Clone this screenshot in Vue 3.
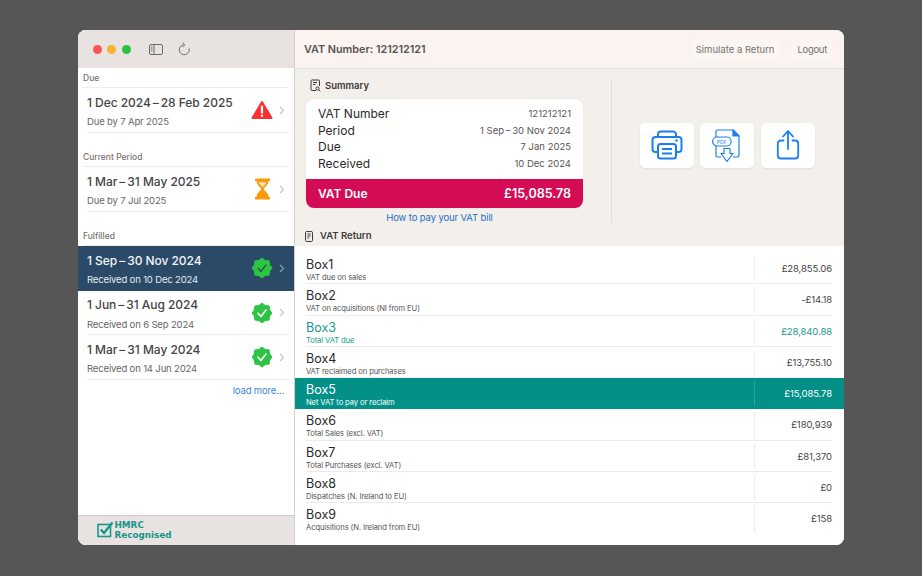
<script setup>
const sections = [
  {
    title: 'Due',
    items: [{ period: '1 Dec 2024\u2009–\u200928 Feb 2025', note: 'Due by 7 Apr 2025', status: 'alert' }],
  },
  {
    title: 'Current Period',
    items: [{ period: '1 Mar\u2009–\u200931 May 2025', note: 'Due by 7 Jul 2025', status: 'wait' }],
  },
  {
    title: 'Fulfilled',
    items: [
      { period: '1 Sep\u2009–\u200930 Nov 2024', note: 'Received on 10 Dec 2024', status: 'done', selected: true },
      { period: '1 Jun\u2009–\u200931 Aug 2024', note: 'Received on 6 Sep 2024', status: 'done' },
      { period: '1 Mar\u2009–\u200931 May 2024', note: 'Received on 14 Jun 2024', status: 'done' },
    ],
  },
];

const summary = [
  ['VAT Number', '121212121'],
  ['Period', '1 Sep\u2009–\u200930 Nov 2024'],
  ['Due', '7 Jan 2025'],
  ['Received', '10 Dec 2024'],
];

const boxes = [
  { name: 'Box1', desc: 'VAT due on sales', value: '£28,855.06' },
  { name: 'Box2', desc: 'VAT on acquisitions (NI from EU)', value: '-£14.18' },
  { name: 'Box3', desc: 'Total VAT due', value: '£28,840.88', kind: 'teal' },
  { name: 'Box4', desc: 'VAT reclaimed on purchases', value: '£13,755.10' },
  { name: 'Box5', desc: 'Net VAT to pay or reclaim', value: '£15,085.78', kind: 'net' },
  { name: 'Box6', desc: 'Total Sales (excl. VAT)', value: '£180,939' },
  { name: 'Box7', desc: 'Total Purchases (excl. VAT)', value: '£81,370' },
  { name: 'Box8', desc: 'Dispatches (N. Ireland to EU)', value: '£0' },
  { name: 'Box9', desc: 'Acquisitions (N. Ireland from EU)', value: '£158' },
];

// scalloped verified badge
const badge = (() => {
  const pts = [];
  for (let i = 0; i < 16; i++) {
    const r = i % 2 ? 8.2 : 10;
    const a = (Math.PI * 2 * i) / 16;
    pts.push(`${(11 + r * Math.sin(a)).toFixed(2)},${(11 - r * Math.cos(a)).toFixed(2)}`);
  }
  return pts.join(' ');
})();
</script>

<template>
  <div class="desktop">
    <div class="window">
      <aside class="sidebar">
        <div class="toolbar">
          <span class="light red"></span>
          <span class="light yellow"></span>
          <span class="light green"></span>
          <svg class="tool-icon panel" width="14" height="11" viewBox="0 0 14 11" fill="none" stroke="#6f6b68" stroke-width="1">
            <rect x="0.5" y="0.5" width="13" height="10" rx="1.5" />
            <path d="M5 0.5v10" />
            <path d="M1.800 3h1.700M1.800 5h1.700M1.800 7h1.700" />
          </svg>
          <svg class="tool-icon reload" width="12" height="14" viewBox="0 0 12 14" fill="none" stroke="#6f6b68" stroke-width="1">
            <path d="M5.500 2.800a5 5 0 1 0 5.600 3.600" />
            <path d="M4.500 0.600 6.800 2.800 4.500 5" />
          </svg>
        </div>

        <div class="periods">
          <section v-for="section in sections" :key="section.title" class="period-group">
            <h3>{{ section.title }}</h3>
            <div
              v-for="item in section.items"
              :key="item.period"
              class="period"
              :class="{ selected: item.selected }"
            >
              <div class="period-text">
                <div class="period-title">{{ item.period }}</div>
                <div class="period-note">{{ item.note }}</div>
              </div>
              <svg v-if="item.status === 'alert'" class="status" width="22" height="20" viewBox="0 0 22 20">
                <path d="M11 2 20.500 18H1.500Z" fill="#fb3131" stroke="#fb3131" stroke-width="2" stroke-linejoin="round" />
                <path d="M11 6.500v6" stroke="#fff" stroke-width="2.200" stroke-linecap="round" />
                <circle cx="11" cy="15.800" r="1.200" fill="#fff" />
              </svg>
              <svg v-else-if="item.status === 'wait'" class="status" width="22" height="22" viewBox="0 0 22 22">
                <path d="M4 0.500h15v2.500H4zM4 19h15v2.500H4z" fill="#fa9a0a" />
                <path d="M5.500 3h12c0 4-4 6-4.800 8 .8 2 4.800 4 4.800 8h-12c0-4 4-6 4.800-8-.8-2-4.800-4-4.800-8Z" fill="#fa9a0a" />
                <path d="M7.500 4.200h8c-.6 2-2.800 3.400-4 5-1.200-1.600-3.400-3-4-5Z" fill="#fde3b5" />
              </svg>
              <svg v-else class="status" width="22" height="22" viewBox="0 0 22 22">
                <polygon :points="badge" fill="#2bc444" stroke="#2bc444" stroke-width="1" stroke-linejoin="round" />
                <path
                  d="M7 11.200 9.900 14.400 15 8"
                  fill="none"
                  :stroke="item.selected ? '#1d4a38' : '#fff'"
                  :stroke-width="item.selected ? 1.2 : 1.6"
                  stroke-linecap="round"
                  stroke-linejoin="round"
                />
              </svg>
              <svg class="chevron" width="6" height="9" viewBox="0 0 6 9" fill="none" stroke-width="1.100">
                <path d="M1 1l3.600 3.500L1 8" />
              </svg>
            </div>
          </section>
          <a class="load-more">load more...</a>
        </div>

        <div class="recognised">
          <svg width="17" height="17" viewBox="0 0 17 17" fill="none" stroke="#17968c">
            <rect x="1" y="3.500" width="12.500" height="12" stroke-width="1.600" />
            <path d="M3.800 8.500 7 12 15.500 1.500" stroke-width="2.400" />
          </svg>
          <div class="recognised-text">HMRC<br />Recognised</div>
        </div>
      </aside>

      <main class="content">
        <header class="topbar">
          <h1>VAT Number: 121212121</h1>
          <button class="top-btn simulate">Simulate a Return</button>
          <button class="top-btn logout">Logout</button>
        </header>

        <div class="overview">
          <div class="summary-col">
            <div class="section-title summary-title">
              <svg width="11" height="13" viewBox="0 0 11 13" fill="none" stroke="#3b3a39" stroke-width="1">
                <path d="M6 11.500H2a1 1 0 0 1-1-1V2a1 1 0 0 1 1-1h6.500a1 1 0 0 1 1 1v5" />
                <path d="M3 3.500h4M3 5.500h2.500" />
                <circle cx="7.500" cy="9.500" r="1.600" />
                <path d="M8.700 10.700 10.300 12.300" />
              </svg>
              Summary
            </div>
            <div class="summary-card">
              <div class="summary-rows">
                <div v-for="row in summary" :key="row[0]" class="summary-row">
                  <span>{{ row[0] }}</span>
                  <span class="summary-value">{{ row[1] }}</span>
                </div>
              </div>
              <div class="vat-due">
                <span>VAT Due</span>
                <span class="vat-amount">£15,085.78</span>
              </div>
            </div>
            <a class="pay-link">How to pay your VAT bill</a>
            <div class="section-title return-title">
              <svg width="8" height="11" viewBox="0 0 8 11" fill="none" stroke="#3b3a39" stroke-width="1">
                <rect x="0.500" y="0.500" width="7" height="10" rx="1.200" />
                <path d="M2.300 3h3.400M2.300 5h3.400M2.300 7h1.800" />
              </svg>
              VAT Return
            </div>
          </div>

          <div class="actions">
            <button class="action">
              <svg width="32" height="30" viewBox="0 0 32 30" fill="none" stroke="#1a7ff0" stroke-width="2" stroke-linejoin="round">
                <path d="M7 7V4.500A3 3 0 0 1 10 1.500h12a3 3 0 0 1 3 3V7" />
                <path d="M7 22H4.500a3 3 0 0 1-3-3V10a3 3 0 0 1 3-3h23a3 3 0 0 1 3 3v9a3 3 0 0 1-3 3H25" />
                <rect x="7" y="14" width="18" height="14.500" rx="2.500" fill="#fff" />
                <path d="M11 19h10M11 23.500h10" />
                <circle cx="25.500" cy="10.500" r="1.300" fill="#1a7ff0" stroke="none" />
              </svg>
            </button>
            <button class="action">
              <svg class="pdf-icon" width="30" height="34" viewBox="0 0 30 34" fill="none" stroke="#1a7ff0" stroke-width="1.200" stroke-linejoin="round">
                <path d="M4 9V3.500A1.500 1.500 0 0 1 5.500 2H21l6 6v19.500a1.500 1.500 0 0 1-1.500 1.500H21" />
                <path d="M4 18v9.500A1.500 1.500 0 0 0 5.500 29H9" />
                <path d="M21 2v6h6Z" fill="#1a7ff0" />
                <rect x="0.600" y="9" width="18.500" height="9" rx="4.500" fill="#fff" />
                <text x="4.800" y="15.700" class="pdf-label">PDF</text>
                <path d="M12 20.500v5H9L15 33.500 21 25.500H18v-5Z" fill="#fff" />
              </svg>
            </button>
            <button class="action">
              <svg width="26" height="30" viewBox="0 0 26 30" fill="none" stroke="#1a7ff0" stroke-width="1.800" stroke-linecap="round" stroke-linejoin="round">
                <path d="M8.500 10.500H5.800a3 3 0 0 0-3 3v12a3 3 0 0 0 3 3h14.400a3 3 0 0 0 3-3v-12a3 3 0 0 0-3-3H17.500" />
                <path d="M13 19V1.500" />
                <path d="M8 6.500 13 1.200 18 6.500" />
              </svg>
            </button>
          </div>
        </div>

        <div class="boxes">
          <div v-for="box in boxes" :key="box.name" class="box-row" :class="box.kind">
            <div class="box-label">
              <div class="box-name">{{ box.name }}</div>
              <div class="box-desc">{{ box.desc }}</div>
            </div>
            <div class="box-value">{{ box.value }}</div>
          </div>
        </div>
      </main>
    </div>
  </div>
</template>

<style>
html,
body {
  margin: 0;
  background: #565656;
}
</style>

<style scoped>
.desktop {
  width: 922px;
  height: 576px;
  box-sizing: border-box;
  padding: 30px 78px 31px;
  background: #565656;
  font-family: Inter, 'Noto Sans', sans-serif;
  overflow: hidden;
}
.window {
  height: 515px;
  display: flex;
  border-radius: 8px;
  overflow: hidden;
  background: #fff;
}
.sidebar {
  width: 216px;
  flex: none;
  display: flex;
  flex-direction: column;
  border-right: 1px solid #d4d0cc;
  background: #fff;
}
.toolbar {
  height: 38px;
  flex: none;
  display: flex;
  align-items: center;
  padding-left: 14.500px;
  background: #e8e3e0;
}
.light {
  width: 9px;
  height: 9px;
  border-radius: 50%;
  margin-right: 5.500px;
}
.red {
  background: #f4565a;
}
.yellow {
  background: #f7b52e;
}
.green {
  background: #27c23f;
}
.tool-icon {
  flex: none;
}
.panel {
  margin-left: 13px;
}
.reload {
  margin-left: 15px;
}
.periods {
  flex: 1;
  display: flex;
  flex-direction: column;
}
.period-group h3 {
  margin: 0;
  height: 20px;
  box-sizing: border-box;
  padding: 5px 0 0 5px;
  font-size: 8.500px;
  line-height: 11px;
  font-weight: 500;
  color: #77736f;
  position: relative;
}
.period-group h3::after {
  content: '';
  position: absolute;
  left: 5px;
  right: 5px;
  bottom: 0;
  height: 1px;
  background: #eeecea;
}
.period-group + .period-group {
  margin-top: 14.500px;
}
.period {
  position: relative;
  height: 44.500px;
  display: flex;
  align-items: center;
  padding-left: 9px;
  padding-right: 9px;
  color: #444;
}
.period::after {
  content: '';
  position: absolute;
  left: 9px;
  right: 5px;
  bottom: 0;
  height: 1px;
  background: #eeecea;
}
.period.selected {
  background: #2a4a68;
  color: #f2f4f6;
}
.period.selected::after {
  display: none;
}
.period-text {
  flex: 1;
  min-width: 0;
  padding-top: 2px;
}
.period-title {
  font-size: 12px;
  line-height: 16px;
  font-weight: 500;
  letter-spacing: -0.050px;
  white-space: nowrap;
}
.period-note {
  margin-top: 5.500px;
  font-size: 9.500px;
  line-height: 12px;
  letter-spacing: -0.150px;
  color: #666;
  white-space: nowrap;
}
.selected .period-note {
  color: #e6eaee;
}
.status {
  flex: none;
  margin-right: 6px;
}
.chevron {
  flex: none;
  stroke: #c4c4c4;
}
.selected .chevron {
  stroke: #8fa2b4;
}
.load-more {
  align-self: flex-end;
  margin: 5.500px 10px 0 0;
  font-size: 9.500px;
  line-height: 12px;
  letter-spacing: -0.150px;
  color: #3b86e0;
}
.recognised {
  height: 30px;
  flex: none;
  box-sizing: border-box;
  display: flex;
  align-items: center;
  gap: 1px;
  padding: 0 0 2px 18.500px;
  background: #e8e3e0;
  border-top: 1px solid #d0ccc8;
}
.recognised-text {
  font-family: 'DejaVu Sans', sans-serif;
  font-size: 8.800px;
  line-height: 10px;
  font-weight: 700;
  color: #17968c;
}
.content {
  flex: 1;
  min-width: 0;
  display: flex;
  flex-direction: column;
}
.topbar {
  height: 39px;
  flex: none;
  box-sizing: border-box;
  display: flex;
  align-items: center;
  padding: 0 10px 0 9px;
  background: #faf3ef;
  border-bottom: 1px solid #e2dfdb;
}
.topbar h1 {
  flex: 1;
  margin: 0;
  font-size: 10.800px;
  font-weight: 600;
  color: #555;
}
.top-btn {
  height: 25px;
  border: 1px solid #f8f1ec;
  border-radius: 4px;
  background: #fbf6f2;
  font-family: inherit;
  font-size: 9.500px;
  color: #76716e;
  padding: 0 6px;
}
.logout {
  margin-left: 9px;
  letter-spacing: -0.300px;
}
.overview {
  height: 177px;
  flex: none;
  display: flex;
  background: #f3efeb;
}
.summary-col {
  width: 317px;
  flex: none;
  padding-top: 9px;
  margin-top: 1px;
  position: relative;
  display: flex;
  flex-direction: column;
}
.summary-col::after {
  content: '';
  position: absolute;
  right: 0;
  top: 10px;
  height: 143px;
  width: 1px;
  background: #e0dcd8;
}
.section-title {
  display: flex;
  align-items: center;
  font-size: 9.500px;
  line-height: 12px;
  font-weight: 600;
  color: #3b3a39;
}
.summary-title {
  padding-left: 15px;
  gap: 4px;
}
.return-title {
  margin-top: 6px;
  padding-left: 10px;
  gap: 7px;
}
.summary-card {
  width: 277px;
  margin: 7px 0 0 11px;
  border-radius: 8px;
  overflow: hidden;
  background: #fff;
  box-shadow: 0 0 3px rgba(0, 0, 0, 0.05);
}
.summary-rows {
  height: 80px;
  box-sizing: border-box;
  padding: 6.500px 12px 0;
}
.summary-row {
  height: 16.600px;
  display: flex;
  align-items: center;
  justify-content: space-between;
  font-size: 12px;
  color: #2a2a2a;
}
.summary-value {
  font-size: 9.500px;
  color: #555;
}
.vat-due {
  height: 29px;
  box-sizing: border-box;
  display: flex;
  align-items: center;
  justify-content: space-between;
  padding: 0 12px;
  background: #d40b55;
  color: #fff;
  font-size: 12px;
  font-weight: 600;
}
.vat-amount {
  font-size: 12.500px;
}
.pay-link {
  width: 267px;
  margin: 4px 0 0 11px;
  text-align: center;
  font-size: 9.500px;
  line-height: 12px;
  letter-spacing: -0.120px;
  color: #1c70c8;
}
.actions {
  flex: 1;
  display: flex;
  gap: 6.300px;
  padding: 54px 0 0 27.500px;
  align-items: flex-start;
}
.action {
  width: 54.300px;
  height: 44.500px;
  padding: 0;
  border: none;
  border-radius: 5px;
  background: #fff;
  box-shadow: 0 1px 2px rgba(0, 0, 0, 0.08);
  display: flex;
  align-items: center;
  justify-content: center;
}
.pdf-label {
  font-family: Inter, sans-serif;
  font-size: 5px;
  fill: #1a7ff0;
  stroke: none;
}
.boxes {
  flex: 1;
  display: flex;
  flex-direction: column;
  padding-top: 7px;
  background: #fff;
}
.box-row {
  height: 31.300px;
  flex: none;
  box-sizing: border-box;
  display: flex;
  padding: 0 12px 0 11px;
  position: relative;
  color: #2a2a2a;
}
.box-row::after {
  content: '';
  position: absolute;
  left: 11px;
  right: 12px;
  bottom: 0;
  height: 1px;
  background: #ecebea;
}
.box-label {
  flex: 1;
  min-width: 0;
}
.box-name {
  font-size: 12.500px;
  line-height: 15px;
  margin-top: 4px;
}
.box-desc {
  margin-top: 1px;
  font-size: 7.600px;
  line-height: 10px;
  letter-spacing: -0.100px;
  color: #555;
}
.box-value {
  width: 77px;
  margin: 3px 0;
  border-left: 1px solid #eeedec;
  font-size: 9.500px;
  line-height: 25px;
  letter-spacing: -0.100px;
  text-align: right;
  color: #444;
}
.box-row.teal,
.teal .box-desc,
.teal .box-value {
  color: #169a90;
}
.box-row.net {
  background: #029089;
  color: #fff;
}
.net .box-desc,
.net .box-value {
  color: #fff;
}
.net .box-value {
  border-left-color: #2aa59e;
}
.box-row.net::after {
  display: none;
}
.box-row:last-child::after {
  display: none;
}
</style>
